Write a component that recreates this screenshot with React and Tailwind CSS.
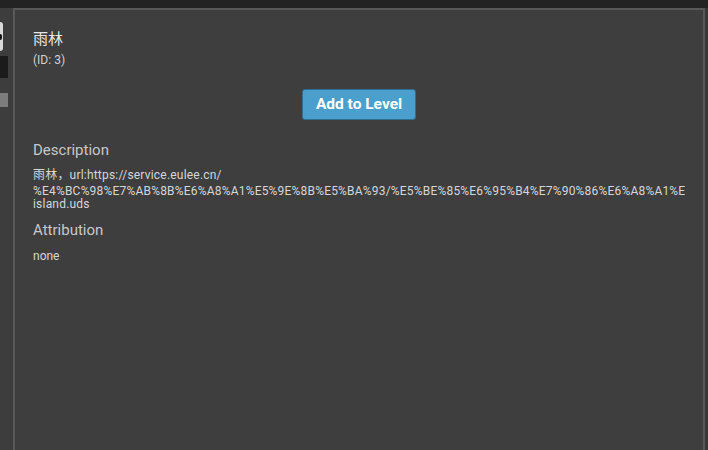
const FONT = { fontFamily: 'Roboto, "Noto Sans CJK SC", "Noto Sans", sans-serif' };

const asset = {
  name: '雨林',
  id: 3,
  description: [
    '雨林，url:https://service.eulee.cn/',
    '%E4%BC%98%E7%AB%8B%E6%A8%A1%E5%9E%8B%E5%BA%93/%E5%BE%85%E6%95%B4%E7%90%86%E6%A8%A1%E5%9E%8B-',
    'island.uds',
  ],
  attribution: 'none',
};

function SideStrip() {
  return (
    <div className="flex w-[13px] shrink-0 flex-col">
      <div className="mt-[14px] flex h-[29px] w-[3px] items-center rounded-r-[3px] bg-[#d9d9d9]">
        <span className="h-[6px] w-[2px] rounded-r-full bg-[#111]" />
      </div>
      <div className="mt-[5px] h-[22px] w-[8px] bg-[#1b1b1b]" />
      <div className="mt-[15px] h-[14px] w-[8px] bg-[#7c7c7c]" />
    </div>
  );
}

export default function App() {
  return (
    <div className="flex h-[450px] w-[708px] flex-col overflow-hidden bg-[#3d3d3d]" style={FONT}>
      <div className="h-[8px] shrink-0 bg-[#232323]" />
      <div className="flex min-h-0 flex-1">
        <SideStrip />
        <div className="flex min-w-0 flex-1 flex-col border-2 border-b-0 border-[#595959] bg-[#3e3e3e] pl-[18px] pt-[20px]">
          <div className="h-[18px] text-[15px] leading-[18px] text-[#e6e6e6]">{asset.name}</div>
          <div className="mt-[5px] h-[14px] text-[12px] leading-[14px] text-[#d0d0d0]">(ID: {asset.id})</div>
          <div className="mt-[22px] flex justify-center pr-[18px]">
            <button className="h-[31px] w-[114px] rounded-[3px] border border-[#2f6f92] bg-[#4a9fcc] text-[15.5px] font-bold text-white">
              Add to Level
            </button>
          </div>
          <div className="mt-[21px] h-[18px] text-[15px] leading-[18px] text-[#c8c8c8]">Description</div>
          <div className="mt-[9px] w-[652px] overflow-hidden text-[12px] tracking-[0.2px] text-[#d6d6d6]">
            <div className="h-[17px] whitespace-nowrap leading-[15px]">{asset.description[0]}</div>
            <div className="h-[13px] whitespace-nowrap leading-[13px]">{asset.description[1]}</div>
            <div className="h-[13px] whitespace-nowrap leading-[13px]">{asset.description[2]}</div>
          </div>
          <div className="mt-[10px] h-[18px] text-[15px] leading-[18px] text-[#c8c8c8]">Attribution</div>
          <div className="mt-[10px] h-[14px] text-[12px] leading-[14px] text-[#d6d6d6]">{asset.attribution}</div>
        </div>
        <div className="w-[3px] shrink-0 bg-[#383838]" />
      </div>
    </div>
  );
}
